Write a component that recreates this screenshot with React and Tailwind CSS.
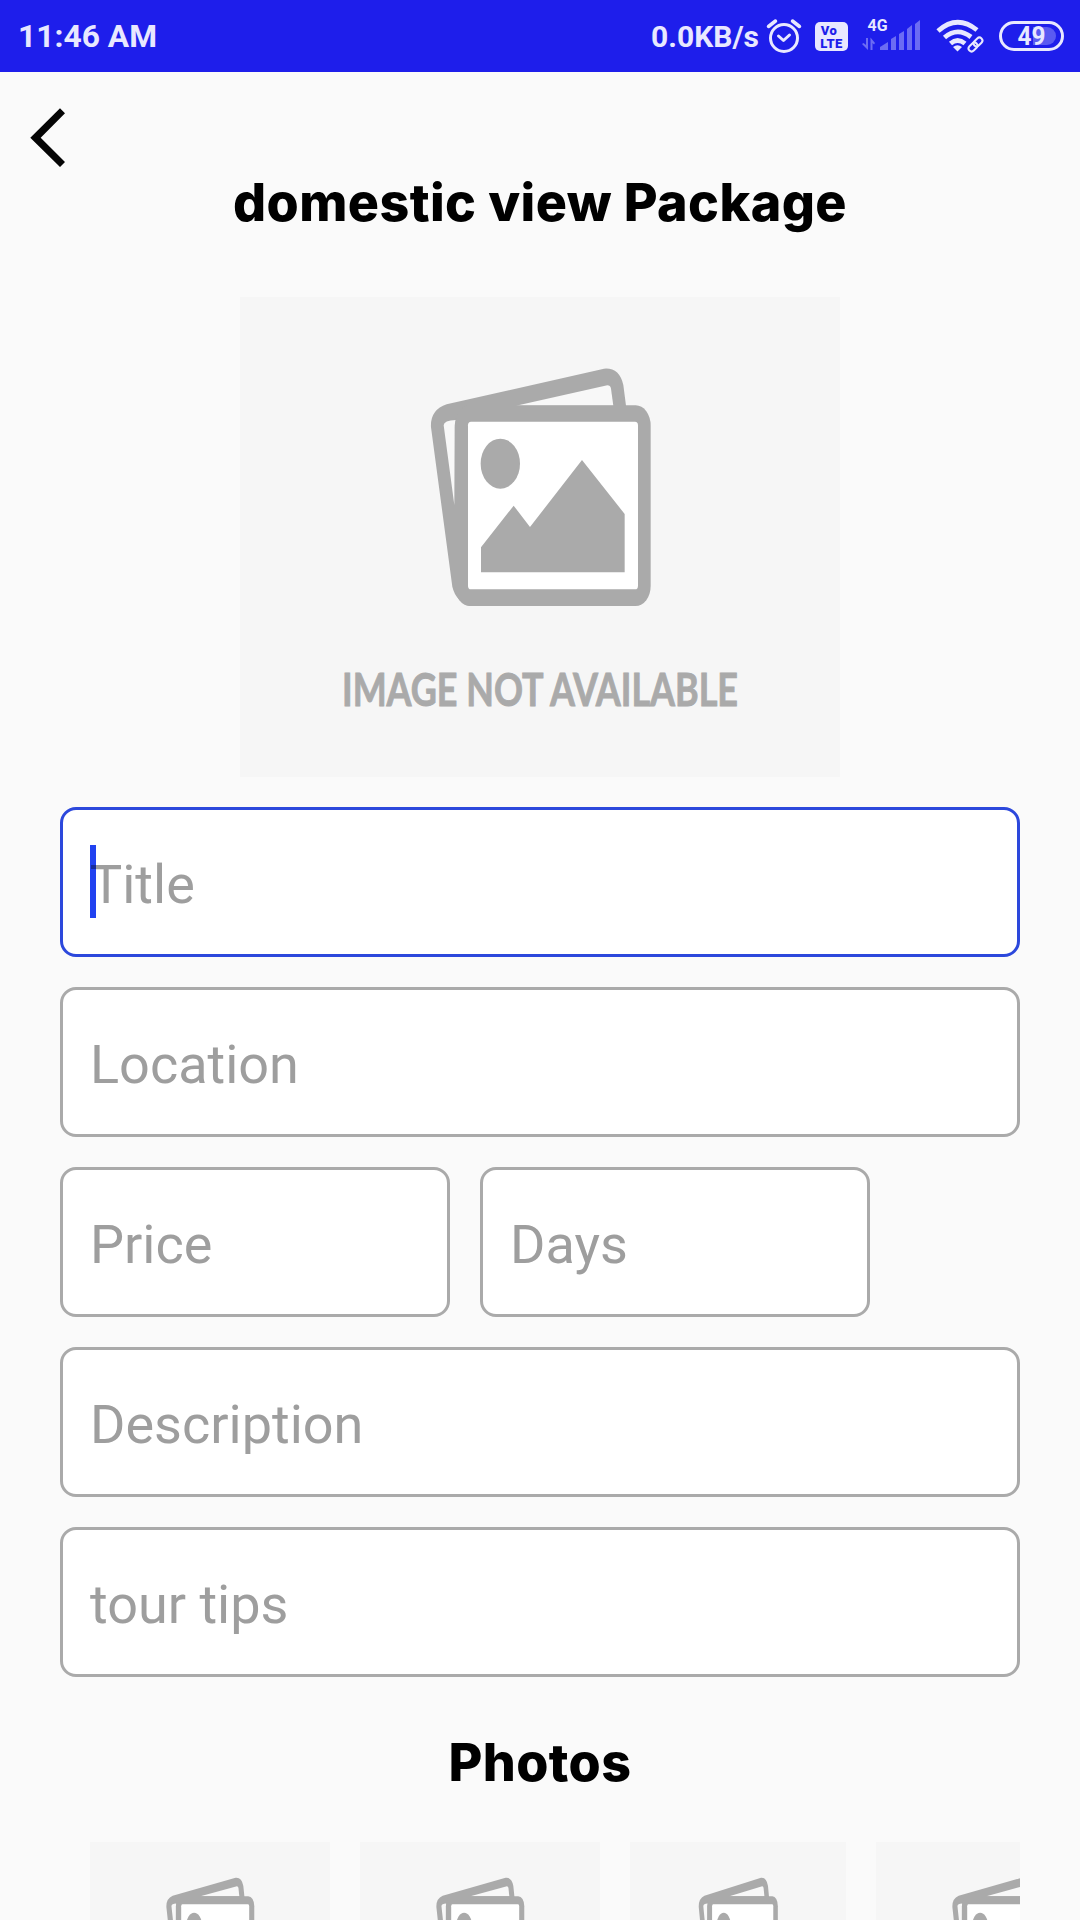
import React from "react";

function Placeholder({ className, caption }) {
  return (
    <svg className={className} viewBox="0 0 600 480" preserveAspectRatio="none">
      <rect width="600" height="480" fill="#f6f6f6" />
      <g transform="translate(160 43) scale(0.33333)">
        <path
          d="M93 262 Q90 210 140 193 L612 86 Q658 82 670 135 L679 205 L300 260 L230 798 L210 798 Q168 785 157 740 Z"
          fill="#aaaaaa"
        />
        <path d="M348 197 L622 136 Q631 136 633 146 L640 197 Z" fill="#f8f8f8" />
        <path d="M131 256 Q131 241 168 240 Q164 250 164 262 L163 495 Z" fill="#f8f8f8" />
        <rect x="165" y="196" width="587" height="602" rx="45" ry="60" fill="#aaaaaa" />
        <rect x="204" y="245" width="510" height="503" rx="9" ry="11" fill="#ffffff" />
        <ellipse cx="301" cy="371" rx="59" ry="75" fill="#aaaaaa" />
        <path d="M243 622 L341 497 L390 561 L546 360 L674 522 V697 H243 Z" fill="#aaaaaa" />
      </g>
      {caption && (
        <text
          x="102"
          y="409"
          textLength="396"
          lengthAdjust="spacingAndGlyphs"
          fill="#aaaaaa"
          stroke="#aaaaaa"
          strokeWidth="0.9"
          className="font-['Lato',sans-serif] text-[46px] font-bold"
        >
          {caption}
        </text>
      )}
    </svg>
  );
}

function StatusIcons() {
  return (
    <>
      <svg className="ml-[7px] h-[36px] w-[36px]" viewBox="0 0 36 36" fill="none" stroke="#e8e8ff" strokeWidth="3" strokeLinecap="round">
        <circle cx="18" cy="20" r="13.5" />
        <path d="M2.5 8.5 L9.5 3 M33.500 8.500 L26.500 3" strokeWidth="3.500" />
        <path d="M12.500 18 L17.500 22.500 L23.500 17" strokeLinejoin="round" />
      </svg>
      <div className="mt-px ml-[13px] flex h-[29px] w-[33px] flex-col items-center justify-center rounded-[5px] bg-[#e8e8ff] font-['Roboto',sans-serif] text-[13px] leading-[13px] font-black text-[#1e1eeb]">
        <span className="-ml-[5px] tracking-wide">Vo</span>
        <span className="tracking-[0.4px]">LTE</span>
      </div>
      <svg className="mb-[4px] ml-[14px] h-[36px] w-[60px]" viewBox="0 0 60 36">
        <text x="5.500" y="15" textLength="20" lengthAdjust="spacingAndGlyphs" fill="#e8e8ff" className="font-['Roboto',sans-serif] text-[16px] font-bold">4G</text>
        <g fill="#6c6cf3">
          <path d="M4 22 H6 V34 L0 28 L1.500 27 L4 29 Z" />
          <path d="M10.500 34 H8.500 V21.500 L13 27 L12 28.500 L10.500 27 Z" />
          <path d="M18 34 V31 L26 26 V34 Z" />
          <path d="M29 34 V23 L34 20 V34 Z" />
          <path d="M37 34 V18 L42 15 V34 Z" />
          <path d="M45 34 V13 L50 9 V34 Z" />
          <path d="M53 34 V8 L58 4 V34 Z" />
        </g>
      </svg>
    </>
  );
}

function StatusBar() {
  return (
    <header className="flex h-[72px] shrink-0 items-center bg-[#1e1eeb] font-['Roboto',sans-serif] font-bold text-[#e8e8ff]">
      <span className="mt-[2px] ml-[18px] text-[31.8px] leading-none">11:46 AM</span>
      <span className="mt-[2px] ml-auto text-[30px] leading-none">0.0KB/s</span>
      <StatusIcons />
      <svg className="ml-[14px] h-[34px] w-[50px]" viewBox="0 0 50 34" fill="none" stroke="#e8e8ff" strokeWidth="4.800">
        <path d="M2 12 Q21 -5 41 11" />
        <path d="M8.500 18.500 Q21.500 7.500 35 18" />
        <path d="M14.500 24.500 Q21.500 18.500 29 24.500" />
        <path d="M17 28 Q21.500 24.500 26 28 L21.500 32.500 Z" fill="#e8e8ff" stroke="none" />
        <g strokeWidth="2" transform="rotate(-45 39.500 25.500)">
          <rect x="31" y="22.500" width="10" height="6" rx="3" />
          <rect x="38" y="22.500" width="10" height="6" rx="3" />
        </g>
      </svg>
      <svg className="mr-[16px] ml-[13px] h-[30px] w-[65px]" viewBox="0 0 65 30">
        <rect x="1.500" y="1.500" width="62" height="27" rx="13.500" fill="none" stroke="#e8e8ff" strokeWidth="3" />
        <path d="M34 6 H48 A9 9 0 0 1 48 24 H34 Z" fill="#5a5af1" />
        <text x="18.500" y="24" textLength="28" lengthAdjust="spacingAndGlyphs" fill="#e8e8ff" className="font-['Roboto',sans-serif] text-[26px] font-bold">49</text>
      </svg>
    </header>
  );
}

function Field({ label, className, focused }) {
  return (
    <div
      className={`flex h-[150px] items-center rounded-[16px] border-[3px] bg-white px-[27px] pt-[5px] ${focused ? "border-[#2c48dc]" : "border-[#aaaaaa]"} ${className || ""}`}
    >
      <span className="relative font-['Roboto',sans-serif] text-[54px] leading-[64px] text-[#9e9e9e]">
        {focused && <span className="absolute top-[-8px] left-0 h-[73px] w-[6px] bg-[#2142f0]" />}
        {label}
        {focused && <span className="absolute top-[12px] left-[1px] h-[4px] w-[5px] bg-[#162b9c]" />}
      </span>
    </div>
  );
}

export default function App() {
  return (
    <div className="flex h-[1920px] w-[1080px] flex-col overflow-hidden bg-[#fafafa]">
      <StatusBar />
      <div className="h-[96px] shrink-0 pt-[36px] pl-[30px]">
        <svg className="h-[60px] w-[36px]" viewBox="0 0 36 60">
          <path d="M30 0.300 L35 5.300 L10.700 29.700 L35 54 L30 59 L0.300 29.700 Z" fill="#050505" />
        </svg>
      </div>
      <h1 className="mt-px h-[68px] shrink-0 text-center font-['Inter',sans-serif] text-[52px] leading-[68px] font-extrabold tracking-[0.4px] whitespace-nowrap text-black">
        domestic view Package
      </h1>
      <Placeholder className="mt-[60px] h-[480px] w-[600px] shrink-0 self-center" caption="IMAGE NOT AVAILABLE" />
      <main className="mt-[30px] flex shrink-0 flex-col gap-[30px] px-[60px]">
        <Field label="Title" focused />
        <Field label="Location" />
        <div className="flex gap-[30px]">
          <Field label="Price" className="w-[390px]" />
          <Field label="Days" className="w-[390px]" />
        </div>
        <Field label="Description" />
        <Field label="tour tips" />
      </main>
      <h2 className="mt-[52px] h-[68px] shrink-0 text-center font-['Inter',sans-serif] text-[52px] leading-[68px] font-extrabold tracking-[0.4px] text-black">
        Photos
      </h2>
      <div className="mx-[60px] mt-[45px] flex shrink-0 gap-[30px] overflow-hidden pl-[30px]">
        <Placeholder className="h-[240px] w-[240px] shrink-0" />
        <Placeholder className="h-[240px] w-[240px] shrink-0" />
        <Placeholder className="h-[240px] w-[216px] shrink-0" />
        <Placeholder className="h-[240px] w-[240px] shrink-0" />
      </div>
    </div>
  );
}
